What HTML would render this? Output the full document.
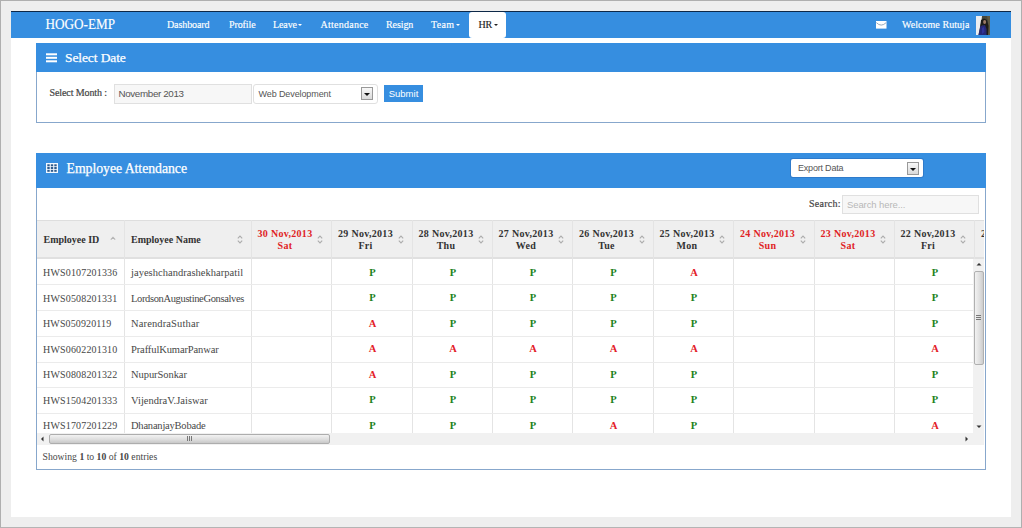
<!DOCTYPE html>
<html><head><meta charset="utf-8">
<style>
*{box-sizing:border-box;margin:0;padding:0}
html,body{width:1022px;height:528px;overflow:hidden}
body{position:relative;background:#eeeeee;font-family:"Liberation Serif",serif}
.abs{position:absolute}
#frame{position:absolute;left:0;top:0;width:1022px;height:528px;border:1px solid #afafaf;border-bottom-color:#b4b4b4}
#page{position:absolute;left:11px;top:38px;width:1000px;height:479px;background:#fff}
#nav{position:absolute;left:11px;top:11px;width:1000px;height:27px;background:#368ee0;border-top:1px solid #0d2848}
.nt{position:absolute;top:-0.5px;line-height:25px;color:#fff;font-weight:normal;font-size:10px;letter-spacing:-0.1px;white-space:nowrap;-webkit-text-stroke:0.15px #fff}
.caret{display:inline-block;width:0;height:0;border-left:2px solid transparent;border-right:2px solid transparent;border-top:2px solid #fff;vertical-align:middle;margin-left:1.5px;margin-top:-1px}
.panel{position:absolute;left:36px;width:950px;border:1px solid #87a7cc;background:#fff}
.ph{position:absolute;left:-1px;top:-1px;width:950px;background:#368ee0}
.lbl{position:absolute;font-weight:normal;font-size:10px;letter-spacing:-0.1px;color:#444;white-space:nowrap;-webkit-text-stroke:0.2px #444}
.sans{font-family:"Liberation Sans",sans-serif}
.selarrow{position:absolute;width:12px;height:13px;border:1px solid #999;background:linear-gradient(#f8f8f8,#dadada)}
.selarrow:after{content:"";position:absolute;left:2px;top:5px;border-left:3px solid transparent;border-right:3px solid transparent;border-top:3px solid #111}
.th{font-weight:bold;font-size:10px;line-height:12px;color:#333;white-space:nowrap}
.th.dt{letter-spacing:0.3px}
.th.red{color:#e01f26}
.td{font-size:10.5px;color:#474747;white-space:nowrap}
.mk{font-weight:bold;font-size:10.5px;text-align:center}
.mk.p{color:#1c821c}
.mk.a{color:#e32027}
.sbthumb{position:absolute;border:1px solid #a0a0a0;border-radius:2px}
</style></head><body>
<div id="frame"></div>
<div id="page"></div>
<div id="nav">
  <div class="nt" style="left:34.5px;font-weight:normal;font-size:13.2px;letter-spacing:0px;line-height:25px;-webkit-text-stroke:0.12px #fff;transform:scaleY(1.06);transform-origin:0 15px">HOGO-EMP</div>
  <div class="nt" style="left:156px">Dashboard</div>
  <div class="nt" style="left:218px">Profile</div>
  <div class="nt" style="left:262px">Leave<span class="caret"></span></div>
  <div class="nt" style="left:309.5px;letter-spacing:0.25px">Attendance</div>
  <div class="nt" style="left:375px">Resign</div>
  <div class="nt" style="left:420px;letter-spacing:0.3px">Team<span class="caret"></span></div>
  <div class="abs" style="left:458px;top:0;width:37px;height:26px;background:#fff;border-radius:3px"></div>
  <div class="nt" style="left:467.5px;color:#222;-webkit-text-stroke:0.15px #222">HR<span class="caret" style="border-top-color:#222"></span></div>
  <svg class="abs" style="left:865px;top:8.5px" width="11" height="8" viewBox="0 0 11 8"><rect x="0" y="0" width="10.5" height="7.6" fill="#fff"/><path d="M0.3 1.6 Q5.2 6.6 10.2 1.6" stroke="#8da0b4" stroke-width="0.9" fill="none"/></svg>
  <div class="nt" style="left:891px;letter-spacing:0.05px">Welcome Rutuja</div>
  <svg class="abs" style="left:965px;top:4px" width="14" height="19" viewBox="0 0 14 19">
    <rect width="14" height="19" fill="#46463a"/>
    <polygon points="0,0 6,0 5.5,5 4,11 2.5,19 0,19" fill="#eceef0"/>
    <polygon points="11,0 14,0 14,19 12,19 12.5,9" fill="#5e5a44"/>
    <polygon points="5,4 8,2.5 11,4 12.5,10 12,19 9,19 7,9 4,12" fill="#1d1c1a"/>
    <ellipse cx="8.6" cy="6" rx="1.5" ry="2" fill="#9c7a66"/>
    <polygon points="4.5,10 9,9 10.5,13 10.5,19 2.5,19 3.5,14" fill="#262878"/>
    <polygon points="6,12 8,11 8.5,16 6,18" fill="#30349a"/>
  </svg>
</div>
<div class="panel" style="top:43px;height:80px">
  <div class="ph" style="height:29px">
    <svg class="abs" style="left:10px;top:9.5px" width="11" height="10" viewBox="0 0 11 10"><rect x="0" y="0.3" width="11" height="2" fill="#fff"/><rect x="0" y="3.8" width="11" height="2" fill="#fff"/><rect x="0" y="7.3" width="11" height="2" fill="#fff"/></svg>
    <div class="abs" style="left:29px;top:0;line-height:29px;color:#fff;font-size:13.5px;letter-spacing:-0.1px;white-space:nowrap;-webkit-text-stroke:0.25px #fff">Select Date</div>
  </div>
  <div class="lbl" style="left:12.5px;top:43px;line-height:12px">Select Month :</div>
  <div class="abs sans" style="left:77px;top:40px;width:138px;height:20px;background:#f7f7f7;border:1px solid #e0e0e0;font-size:9.8px;letter-spacing:-0.35px;line-height:18px;color:#555;padding-left:3.5px">November 2013</div>
  <div class="abs sans" style="left:216px;top:40px;width:125px;height:20px;background:#fff;border:1px solid #e0e0e0;border-radius:3px;font-size:9px;line-height:18px;color:#555;padding-left:4.5px;letter-spacing:-0.1px">Web Development</div>
  <div class="selarrow" style="left:324px;top:43px"></div>
  <div class="abs sans" style="left:347px;top:41px;width:39px;height:17px;background:#368ee0;color:#fff;font-size:9.5px;line-height:17px;text-align:center">Submit</div>
</div>
<div class="panel" style="top:153px;height:317px">
  <div class="ph" style="height:35px">
    <svg class="abs" style="left:10px;top:10px" width="12" height="10" viewBox="0 0 12 10"><rect width="12" height="10" fill="#f2f8ff"/><rect x="1.3" y="1.3" width="2.4" height="2" fill="#2d5a8c"/><rect x="4.8" y="1.3" width="2.4" height="2" fill="#2d5a8c"/><rect x="8.3" y="1.3" width="2.4" height="2" fill="#2d5a8c"/><rect x="1.3" y="4.0" width="2.4" height="2" fill="#2d5a8c"/><rect x="4.8" y="4.0" width="2.4" height="2" fill="#2d5a8c"/><rect x="8.3" y="4.0" width="2.4" height="2" fill="#2d5a8c"/><rect x="1.3" y="6.8" width="2.4" height="2" fill="#2d5a8c"/><rect x="4.8" y="6.8" width="2.4" height="2" fill="#2d5a8c"/><rect x="8.3" y="6.8" width="2.4" height="2" fill="#2d5a8c"/></svg>
    <div class="abs" style="left:30.5px;top:-1px;line-height:34px;color:#fff;font-size:13.8px;letter-spacing:-0.05px;white-space:nowrap;-webkit-text-stroke:0.25px #fff">Employee Attendance</div>
    <div class="abs sans" style="left:755px;top:6px;width:132px;height:18px;background:#fff;border-radius:2px;box-shadow:0 0 0 1px #2f7bcb;font-size:9px;letter-spacing:-0.2px;line-height:18px;color:#555;padding-left:7px">Export Data</div>
    <div class="selarrow" style="left:871px;top:9px"></div>
  </div>
  <div class="lbl" style="left:772px;top:44px;line-height:12px;letter-spacing:0.25px">Search:</div>
  <div class="abs sans" style="left:805px;top:41px;width:137px;height:19px;background:#f7f7f7;border:1px solid #e0e0e0;font-size:9px;line-height:17px;color:#b8b8b8;padding-left:4px;font-size:9.5px;letter-spacing:-0.1px">Search here...</div>
</div>
<div class="abs" style="left:37px;top:220px;width:947px;height:213px;overflow:hidden">
<div class="abs" style="left:0;top:0;width:947px;height:39px;background:#efefef;border-top:1px solid #dedede;border-bottom:2px solid #e0e0e0"></div>
<div class="abs" style="left:87.0px;top:0;width:1px;height:213px;background:#e4e4e4"></div>
<div class="abs" style="left:214.0px;top:0;width:1px;height:213px;background:#e4e4e4"></div>
<div class="abs" style="left:294.0px;top:0;width:1px;height:213px;background:#e4e4e4"></div>
<div class="abs" style="left:375.0px;top:0;width:1px;height:213px;background:#e4e4e4"></div>
<div class="abs" style="left:455.0px;top:0;width:1px;height:213px;background:#e4e4e4"></div>
<div class="abs" style="left:535.0px;top:0;width:1px;height:213px;background:#e4e4e4"></div>
<div class="abs" style="left:616.0px;top:0;width:1px;height:213px;background:#e4e4e4"></div>
<div class="abs" style="left:696.0px;top:0;width:1px;height:213px;background:#e4e4e4"></div>
<div class="abs" style="left:777.0px;top:0;width:1px;height:213px;background:#e4e4e4"></div>
<div class="abs" style="left:857.0px;top:0;width:1px;height:213px;background:#e4e4e4"></div>
<div class="abs" style="left:937.0px;top:0;width:1px;height:213px;background:#e4e4e4"></div>
<div class="abs" style="left:1018.0px;top:0;width:1px;height:213px;background:#e4e4e4"></div>
<div class="abs th" style="left:6.5px;top:13.5px">Employee ID</div>
<svg class="abs" style="left:73.0px;top:14.5px" width="6" height="9" viewBox="0 0 6 9"><path d="M0.8 4.6 L3 2.4 L5.2 4.6" stroke="#b4b4b4" stroke-width="1.1" fill="none"/></svg>
<div class="abs th" style="left:94.0px;top:13.5px">Employee Name</div>
<svg class="abs" style="left:200.0px;top:14.5px" width="6" height="9" viewBox="0 0 6 9"><path d="M0.8 3.3 L3 1.1 L5.2 3.3 M0.8 5.7 L3 7.9 L5.2 5.7" stroke="#acacac" stroke-width="1.1" fill="none"/></svg>
<div class="abs th dt red" style="left:215.0px;top:7.5px;width:66.0px;text-align:center">30 Nov,2013<br>Sat</div>
<svg class="abs" style="left:280.0px;top:14.5px" width="6" height="9" viewBox="0 0 6 9"><path d="M0.8 3.3 L3 1.1 L5.2 3.3 M0.8 5.7 L3 7.9 L5.2 5.7" stroke="#acacac" stroke-width="1.1" fill="none"/></svg>
<div class="abs th dt" style="left:295.0px;top:7.5px;width:67.0px;text-align:center">29 Nov,2013<br>Fri</div>
<svg class="abs" style="left:361.0px;top:14.5px" width="6" height="9" viewBox="0 0 6 9"><path d="M0.8 3.3 L3 1.1 L5.2 3.3 M0.8 5.7 L3 7.9 L5.2 5.7" stroke="#acacac" stroke-width="1.1" fill="none"/></svg>
<div class="abs th dt" style="left:376.0px;top:7.5px;width:66.0px;text-align:center">28 Nov,2013<br>Thu</div>
<svg class="abs" style="left:441.0px;top:14.5px" width="6" height="9" viewBox="0 0 6 9"><path d="M0.8 3.3 L3 1.1 L5.2 3.3 M0.8 5.7 L3 7.9 L5.2 5.7" stroke="#acacac" stroke-width="1.1" fill="none"/></svg>
<div class="abs th dt" style="left:456.0px;top:7.5px;width:66.0px;text-align:center">27 Nov,2013<br>Wed</div>
<svg class="abs" style="left:521.0px;top:14.5px" width="6" height="9" viewBox="0 0 6 9"><path d="M0.8 3.3 L3 1.1 L5.2 3.3 M0.8 5.7 L3 7.9 L5.2 5.7" stroke="#acacac" stroke-width="1.1" fill="none"/></svg>
<div class="abs th dt" style="left:536.0px;top:7.5px;width:67.0px;text-align:center">26 Nov,2013<br>Tue</div>
<svg class="abs" style="left:602.0px;top:14.5px" width="6" height="9" viewBox="0 0 6 9"><path d="M0.8 3.3 L3 1.1 L5.2 3.3 M0.8 5.7 L3 7.9 L5.2 5.7" stroke="#acacac" stroke-width="1.1" fill="none"/></svg>
<div class="abs th dt" style="left:617.0px;top:7.5px;width:66.0px;text-align:center">25 Nov,2013<br>Mon</div>
<svg class="abs" style="left:682.0px;top:14.5px" width="6" height="9" viewBox="0 0 6 9"><path d="M0.8 3.3 L3 1.1 L5.2 3.3 M0.8 5.7 L3 7.9 L5.2 5.7" stroke="#acacac" stroke-width="1.1" fill="none"/></svg>
<div class="abs th dt red" style="left:697.0px;top:7.5px;width:67.0px;text-align:center">24 Nov,2013<br>Sun</div>
<svg class="abs" style="left:763.0px;top:14.5px" width="6" height="9" viewBox="0 0 6 9"><path d="M0.8 3.3 L3 1.1 L5.2 3.3 M0.8 5.7 L3 7.9 L5.2 5.7" stroke="#acacac" stroke-width="1.1" fill="none"/></svg>
<div class="abs th dt red" style="left:778.0px;top:7.5px;width:66.0px;text-align:center">23 Nov,2013<br>Sat</div>
<svg class="abs" style="left:843.0px;top:14.5px" width="6" height="9" viewBox="0 0 6 9"><path d="M0.8 3.3 L3 1.1 L5.2 3.3 M0.8 5.7 L3 7.9 L5.2 5.7" stroke="#acacac" stroke-width="1.1" fill="none"/></svg>
<div class="abs th dt" style="left:858.0px;top:7.5px;width:66.0px;text-align:center">22 Nov,2013<br>Fri</div>
<svg class="abs" style="left:923.0px;top:14.5px" width="6" height="9" viewBox="0 0 6 9"><path d="M0.8 3.3 L3 1.1 L5.2 3.3 M0.8 5.7 L3 7.9 L5.2 5.7" stroke="#acacac" stroke-width="1.1" fill="none"/></svg>
<div class="abs th dt" style="left:938.0px;top:7.5px;width:67.0px;text-align:center">21 Nov,2013<br>Thu</div>
<svg class="abs" style="left:1004.0px;top:14.5px" width="6" height="9" viewBox="0 0 6 9"><path d="M0.8 3.3 L3 1.1 L5.2 3.3 M0.8 5.7 L3 7.9 L5.2 5.7" stroke="#acacac" stroke-width="1.1" fill="none"/></svg>
<div class="abs td" style="left:6px;top:40.30px;height:25.75px;line-height:25.75px;font-size:10px;letter-spacing:0.172px">HWS0107201336</div>
<div class="abs td" style="left:94px;top:40.30px;height:25.75px;line-height:25.75px;letter-spacing:0.030px">jayeshchandrashekharpatil</div>
<div class="abs mk p" style="left:295.0px;top:40.00px;width:81.0px;height:25.75px;line-height:25.75px">P</div>
<div class="abs mk p" style="left:376.0px;top:40.00px;width:80.0px;height:25.75px;line-height:25.75px">P</div>
<div class="abs mk p" style="left:456.0px;top:40.00px;width:80.0px;height:25.75px;line-height:25.75px">P</div>
<div class="abs mk p" style="left:536.0px;top:40.00px;width:81.0px;height:25.75px;line-height:25.75px">P</div>
<div class="abs mk a" style="left:617.0px;top:40.00px;width:80.0px;height:25.75px;line-height:25.75px">A</div>
<div class="abs mk p" style="left:858.0px;top:40.00px;width:80.0px;height:25.75px;line-height:25.75px">P</div>
<div class="abs" style="left:0;top:64.25px;width:937px;height:1px;background:#ebebeb"></div>
<div class="abs td" style="left:6px;top:65.75px;height:25.75px;line-height:25.75px;font-size:10px;letter-spacing:0.172px">HWS0508201331</div>
<div class="abs td" style="left:94px;top:65.75px;height:25.75px;line-height:25.75px;letter-spacing:-0.359px">LordsonAugustineGonsalves</div>
<div class="abs mk p" style="left:295.0px;top:65.45px;width:81.0px;height:25.75px;line-height:25.75px">P</div>
<div class="abs mk p" style="left:376.0px;top:65.45px;width:80.0px;height:25.75px;line-height:25.75px">P</div>
<div class="abs mk p" style="left:456.0px;top:65.45px;width:80.0px;height:25.75px;line-height:25.75px">P</div>
<div class="abs mk p" style="left:536.0px;top:65.45px;width:81.0px;height:25.75px;line-height:25.75px">P</div>
<div class="abs mk p" style="left:617.0px;top:65.45px;width:80.0px;height:25.75px;line-height:25.75px">P</div>
<div class="abs mk p" style="left:858.0px;top:65.45px;width:80.0px;height:25.75px;line-height:25.75px">P</div>
<div class="abs" style="left:0;top:90.00px;width:937px;height:1px;background:#ebebeb"></div>
<div class="abs td" style="left:6px;top:91.20px;height:25.75px;line-height:25.75px;font-size:10px;letter-spacing:0.122px">HWS050920119</div>
<div class="abs td" style="left:94px;top:91.20px;height:25.75px;line-height:25.75px;letter-spacing:0.133px">NarendraSuthar</div>
<div class="abs mk a" style="left:295.0px;top:90.90px;width:81.0px;height:25.75px;line-height:25.75px">A</div>
<div class="abs mk p" style="left:376.0px;top:90.90px;width:80.0px;height:25.75px;line-height:25.75px">P</div>
<div class="abs mk p" style="left:456.0px;top:90.90px;width:80.0px;height:25.75px;line-height:25.75px">P</div>
<div class="abs mk p" style="left:536.0px;top:90.90px;width:81.0px;height:25.75px;line-height:25.75px">P</div>
<div class="abs mk p" style="left:617.0px;top:90.90px;width:80.0px;height:25.75px;line-height:25.75px">P</div>
<div class="abs mk p" style="left:858.0px;top:90.90px;width:80.0px;height:25.75px;line-height:25.75px">P</div>
<div class="abs" style="left:0;top:115.75px;width:937px;height:1px;background:#ebebeb"></div>
<div class="abs td" style="left:6px;top:116.65px;height:25.75px;line-height:25.75px;font-size:10px;letter-spacing:0.172px">HWS0602201310</div>
<div class="abs td" style="left:94px;top:116.65px;height:25.75px;line-height:25.75px;letter-spacing:-0.108px">PraffulKumarPanwar</div>
<div class="abs mk a" style="left:295.0px;top:116.35px;width:81.0px;height:25.75px;line-height:25.75px">A</div>
<div class="abs mk a" style="left:376.0px;top:116.35px;width:80.0px;height:25.75px;line-height:25.75px">A</div>
<div class="abs mk a" style="left:456.0px;top:116.35px;width:80.0px;height:25.75px;line-height:25.75px">A</div>
<div class="abs mk a" style="left:536.0px;top:116.35px;width:81.0px;height:25.75px;line-height:25.75px">A</div>
<div class="abs mk a" style="left:617.0px;top:116.35px;width:80.0px;height:25.75px;line-height:25.75px">A</div>
<div class="abs mk a" style="left:858.0px;top:116.35px;width:80.0px;height:25.75px;line-height:25.75px">A</div>
<div class="abs" style="left:0;top:141.50px;width:937px;height:1px;background:#ebebeb"></div>
<div class="abs td" style="left:6px;top:142.10px;height:25.75px;line-height:25.75px;font-size:10px;letter-spacing:0.172px">HWS0808201322</div>
<div class="abs td" style="left:94px;top:142.10px;height:25.75px;line-height:25.75px;letter-spacing:-0.068px">NupurSonkar</div>
<div class="abs mk a" style="left:295.0px;top:141.80px;width:81.0px;height:25.75px;line-height:25.75px">A</div>
<div class="abs mk p" style="left:376.0px;top:141.80px;width:80.0px;height:25.75px;line-height:25.75px">P</div>
<div class="abs mk p" style="left:456.0px;top:141.80px;width:80.0px;height:25.75px;line-height:25.75px">P</div>
<div class="abs mk p" style="left:536.0px;top:141.80px;width:81.0px;height:25.75px;line-height:25.75px">P</div>
<div class="abs mk p" style="left:617.0px;top:141.80px;width:80.0px;height:25.75px;line-height:25.75px">P</div>
<div class="abs mk p" style="left:858.0px;top:141.80px;width:80.0px;height:25.75px;line-height:25.75px">P</div>
<div class="abs" style="left:0;top:167.25px;width:937px;height:1px;background:#ebebeb"></div>
<div class="abs td" style="left:6px;top:167.55px;height:25.75px;line-height:25.75px;font-size:10px;letter-spacing:0.172px">HWS1504201333</div>
<div class="abs td" style="left:94px;top:167.55px;height:25.75px;line-height:25.75px;letter-spacing:0.022px">VijendraV.Jaiswar</div>
<div class="abs mk p" style="left:295.0px;top:167.25px;width:81.0px;height:25.75px;line-height:25.75px">P</div>
<div class="abs mk p" style="left:376.0px;top:167.25px;width:80.0px;height:25.75px;line-height:25.75px">P</div>
<div class="abs mk p" style="left:456.0px;top:167.25px;width:80.0px;height:25.75px;line-height:25.75px">P</div>
<div class="abs mk p" style="left:536.0px;top:167.25px;width:81.0px;height:25.75px;line-height:25.75px">P</div>
<div class="abs mk p" style="left:617.0px;top:167.25px;width:80.0px;height:25.75px;line-height:25.75px">P</div>
<div class="abs mk p" style="left:858.0px;top:167.25px;width:80.0px;height:25.75px;line-height:25.75px">P</div>
<div class="abs" style="left:0;top:193.00px;width:937px;height:1px;background:#ebebeb"></div>
<div class="abs td" style="left:6px;top:193.00px;height:25.75px;line-height:25.75px;font-size:10px;letter-spacing:0.172px">HWS1707201229</div>
<div class="abs td" style="left:94px;top:193.00px;height:25.75px;line-height:25.75px;letter-spacing:-0.212px">DhananjayBobade</div>
<div class="abs mk p" style="left:295.0px;top:192.70px;width:81.0px;height:25.75px;line-height:25.75px">P</div>
<div class="abs mk p" style="left:376.0px;top:192.70px;width:80.0px;height:25.75px;line-height:25.75px">P</div>
<div class="abs mk p" style="left:456.0px;top:192.70px;width:80.0px;height:25.75px;line-height:25.75px">P</div>
<div class="abs mk a" style="left:536.0px;top:192.70px;width:81.0px;height:25.75px;line-height:25.75px">A</div>
<div class="abs mk p" style="left:617.0px;top:192.70px;width:80.0px;height:25.75px;line-height:25.75px">P</div>
<div class="abs mk a" style="left:858.0px;top:192.70px;width:80.0px;height:25.75px;line-height:25.75px">A</div>
</div>

<div class="abs" style="left:973px;top:259px;width:11px;height:174px;background:#f1f1f1"></div>
<svg class="abs" style="left:976px;top:262px" width="6" height="4" viewBox="0 0 6 4"><path d="M0.5 3.5 L3 1 L5.5 3.5Z" fill="#333"/></svg>
<div class="sbthumb" style="left:973.5px;top:271px;width:10px;height:94px;background:linear-gradient(90deg,#f2f2f2,#dedede 60%,#cccccc);border-color:#b0b0b0"></div>
<div class="abs" style="left:976px;top:315px;width:5px;height:1px;background:#777"></div>
<div class="abs" style="left:976px;top:317px;width:5px;height:1px;background:#777"></div>
<div class="abs" style="left:976px;top:319px;width:5px;height:1px;background:#777"></div>
<svg class="abs" style="left:976px;top:425px" width="6" height="4" viewBox="0 0 6 4"><path d="M0.5 0.5 L3 3 L5.5 0.5Z" fill="#333"/></svg>
<div class="abs" style="left:37px;top:433px;width:947px;height:12px;background:#f1f1f1"></div>
<svg class="abs" style="left:40px;top:436px" width="4" height="6" viewBox="0 0 4 6"><path d="M3.5 0.5 L1 3 L3.5 5.5Z" fill="#333"/></svg>
<div class="sbthumb" style="left:49px;top:434px;width:281px;height:10px;background:linear-gradient(#f2f2f2,#dcdcdc 60%,#c8c8c8);border-color:#adadad"></div>
<div class="abs" style="left:187px;top:436px;width:1px;height:5px;background:#777"></div>
<div class="abs" style="left:189px;top:436px;width:1px;height:5px;background:#777"></div>
<div class="abs" style="left:191px;top:436px;width:1px;height:5px;background:#777"></div>
<svg class="abs" style="left:965px;top:436px" width="4" height="6" viewBox="0 0 4 6"><path d="M0.5 0.5 L3 3 L0.5 5.5Z" fill="#333"/></svg>
<div class="abs td" style="left:42.5px;top:451px;font-size:9.7px;line-height:12px;color:#474747">Showing <b>1</b> to <b>10</b> of <b>10</b> entries</div>

</body></html>
